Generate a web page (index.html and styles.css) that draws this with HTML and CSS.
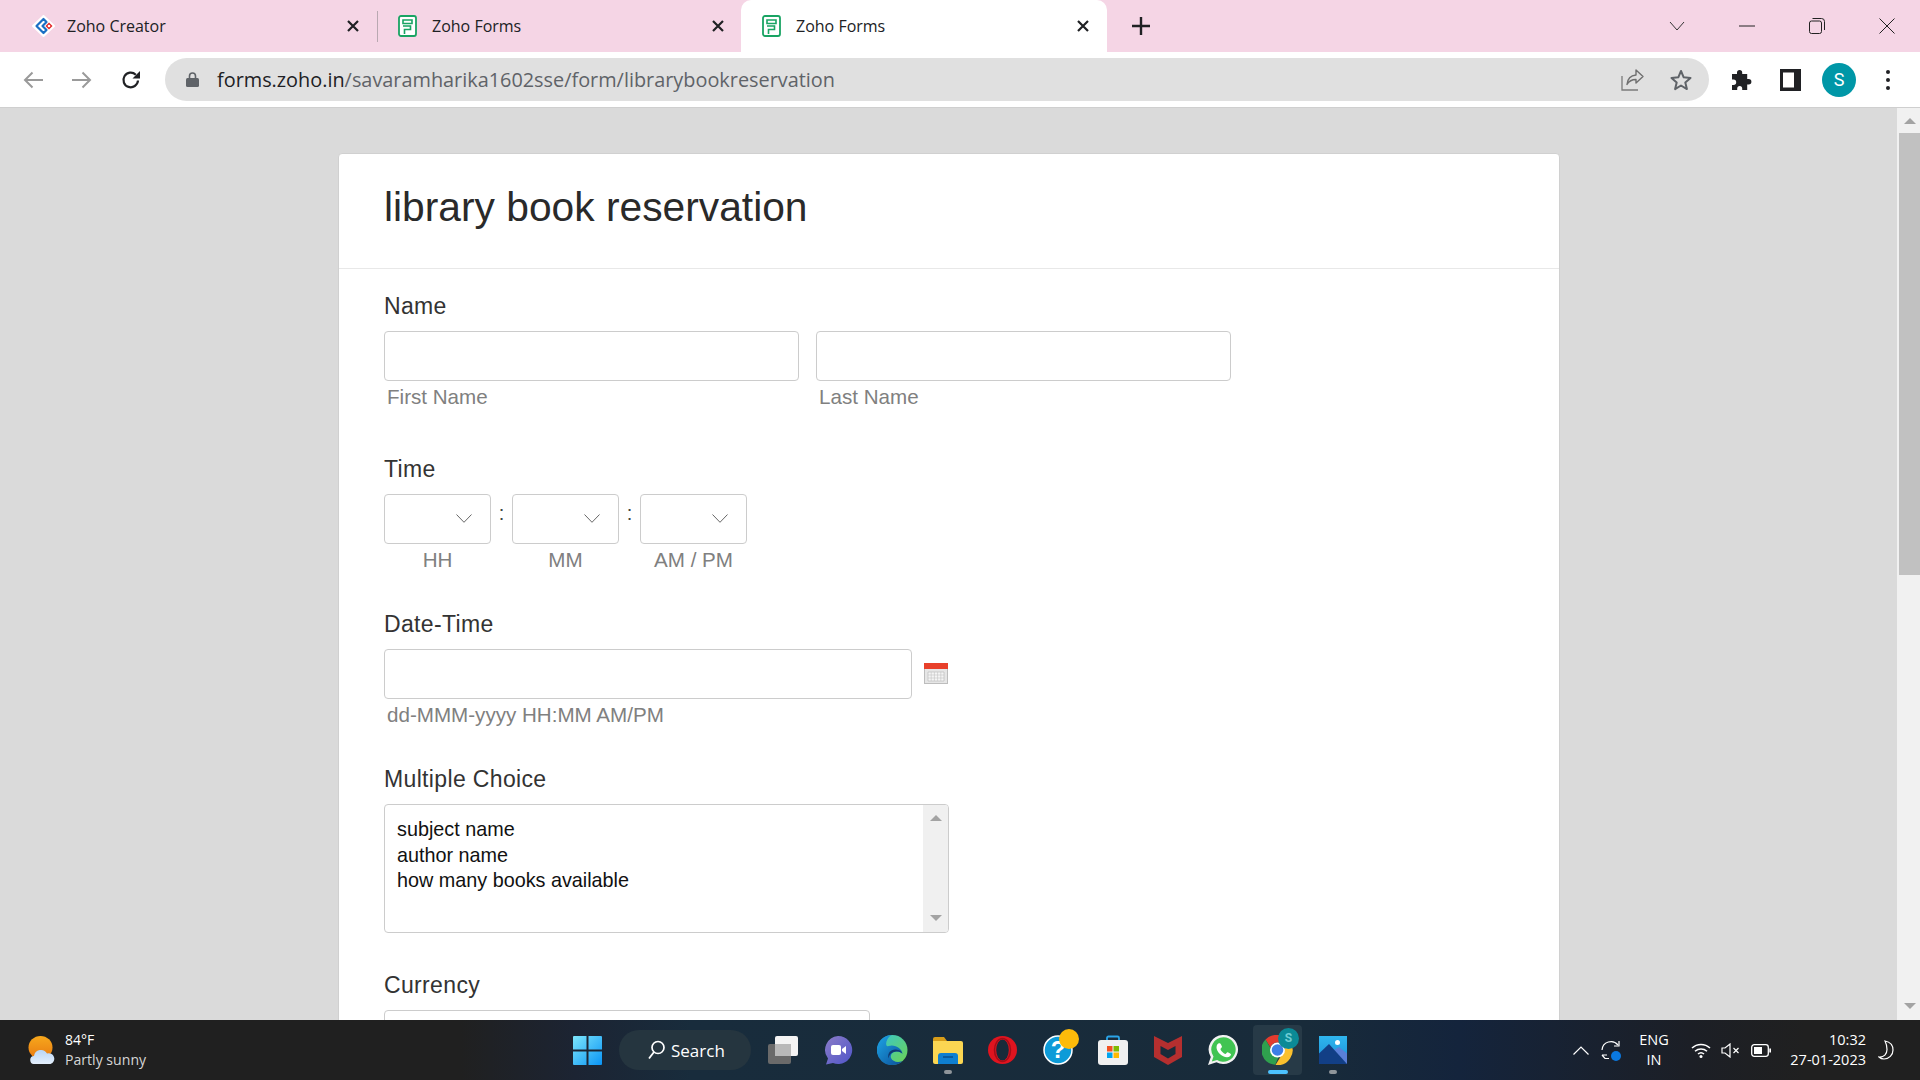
FILE: index.html
```html
<!DOCTYPE html>
<html lang="en">
<head>
    <meta charset="UTF-8">
    <meta name="viewport" content="width=device-width, initial-scale=1.0">
    <title>Zoho Forms</title>
    <link rel="stylesheet" href="styles.css">
</head>
<body>
    <!-- browser tabs -->
    <div class="tabstrip">
        <div class="tab tab-first">
            <svg class="fav-creator" viewBox="0 0 23 22"><path d="M11.500 1 22 11 11.500 21 1 11z" fill="#fff" stroke="#fff" stroke-width="2" stroke-linejoin="round"/><path d="M11.500 4 4.500 11l7 7 3-3-4-4 4-4z" fill="none" stroke="#1a6fc4" stroke-width="2.200" stroke-linejoin="round"/><path d="M17 7.500 20.500 11 17 14.500 13.500 11z" fill="#e42527"/><circle cx="17" cy="11" r="1.300" fill="#fff"/></svg>
            <span class="tab-title">Zoho Creator</span>
            <svg class="tab-close" viewBox="0 0 14 14"><path d="M2 2l10 10M12 2 2 12" stroke="#202124" stroke-width="2.200"/></svg>
        </div>
        <div class="tab-sep"></div>
        <div class="tab tab-second">
            <svg class="fav-forms" viewBox="0 0 19 22"><rect x="1" y="1" width="17" height="20" rx="2" fill="#fff" stroke="#19a463" stroke-width="1.800"/><path d="M5 5h9v3.500H5zM5 11h7.500v3.500H6.500V19" fill="none" stroke="#19a463" stroke-width="1.600"/></svg>
            <span class="tab-title">Zoho Forms</span>
            <svg class="tab-close" viewBox="0 0 14 14"><path d="M2 2l10 10M12 2 2 12" stroke="#202124" stroke-width="2.200"/></svg>
        </div>
        <div class="tab tab-active">
            <svg class="fav-forms" viewBox="0 0 19 22"><rect x="1" y="1" width="17" height="20" rx="2" fill="#fff" stroke="#19a463" stroke-width="1.800"/><path d="M5 5h9v3.500H5zM5 11h7.500v3.500H6.500V19" fill="none" stroke="#19a463" stroke-width="1.600"/></svg>
            <span class="tab-title">Zoho Forms</span>
            <svg class="tab-close" viewBox="0 0 14 14"><path d="M2 2l10 10M12 2 2 12" stroke="#202124" stroke-width="2.200"/></svg>
        </div>
        <svg class="new-tab" viewBox="0 0 18 18"><path d="M9 0v18M0 9h18" stroke="#202124" stroke-width="2.400"/></svg>
        <div class="win-controls">
            <div class="win-btn"><svg width="16" height="10" viewBox="0 0 16 10"><path d="M1 1l7 8 7-8" fill="none" stroke="#333" stroke-width="1"/></svg></div>
            <div class="win-btn"><svg width="16" height="2" viewBox="0 0 16 2"><path d="M0 1h16" stroke="#222" stroke-width="1"/></svg></div>
            <div class="win-btn"><svg width="16" height="16" viewBox="0 0 16 16"><rect x=".5" y="3" width="12" height="12.500" rx="2" fill="none" stroke="#222"/><path d="M3.500.5h9a3 3 0 0 1 3 3V12" fill="none" stroke="#222"/></svg></div>
            <div class="win-btn"><svg width="16" height="16" viewBox="0 0 16 16"><path d="M.5.5l15 15M15.500.5l-15 15" stroke="#222" stroke-width="1"/></svg></div>
        </div>
    </div>

    <!-- address bar -->
    <div class="toolbar">
        <svg class="nav-back" viewBox="0 0 20 18"><path d="M20 9H2M9.500 1.500 2 9l7.500 7.500" fill="none" stroke="#9a9a9a" stroke-width="2"/></svg>
        <svg class="nav-forward" viewBox="0 0 20 18"><path d="M0 9h18M10.500 1.500 18 9l-7.500 7.500" fill="none" stroke="#9a9a9a" stroke-width="2"/></svg>
        <svg class="nav-reload" viewBox="0 0 20 20"><path d="M17 10.500A7.300 7.300 0 1 1 14.800 4.700" fill="none" stroke="#202124" stroke-width="2.200"/><path d="M19 1v7.500h-7.500z" fill="#202124"/></svg>
        <div class="omnibox">
            <svg class="lock" viewBox="0 0 13 15"><path d="M3.500 6V4a3 3 0 0 1 6 0v2" fill="none" stroke="#5f6368" stroke-width="1.600"/><rect y="6" width="13" height="9" rx="1.500" fill="#5f6368"/></svg>
            <div class="url"><span class="url-host">forms.zoho.in</span>/savaramharika1602sse/form/librarybookreservation</div>
            <svg class="share" viewBox="0 0 23 22"><path d="M1 7v14h16" fill="none" stroke="#7b7b7b" stroke-width="1.300"/><path d="M15 1l7 6.500-7 6.500v-3.500c-4.500 0-7 1.500-9 5 .5-5.500 3.500-9 9-9.500z" fill="none" stroke="#6f6f6f" stroke-width="1.400" stroke-linejoin="round"/></svg>
            <svg class="star" viewBox="0 0 22 22"><path d="M11 2l2.700 6.300 6.800.6-5.200 4.500 1.600 6.700L11 16.500 5.100 20.100l1.600-6.700L1.500 8.900l6.800-.6z" fill="none" stroke="#5f6368" stroke-width="2" stroke-linejoin="round"/></svg>
        </div>
        <svg class="puzzle" viewBox="0 0 22 22"><path d="M1 5h5V3.500a2.600 2.600 0 0 1 5.200 0V5h5v5h1.500a2.700 2.700 0 0 1 0 5.400h-1.500V21h-5v-1.500a2.500 2.500 0 0 0-5 0V21H1v-5h1.500a2.700 2.700 0 0 0 0-5.400H1z" fill="#202124"/></svg>
        <svg class="side-panel" viewBox="0 0 21 22"><rect width="21" height="22" fill="#202124"/><rect x="3" y="3.500" width="11" height="15" fill="#fff"/></svg>
        <div class="avatar">S</div>
        <div class="kebab"><i></i><i></i><i></i></div>
    </div>

    <!-- page -->
    <div class="viewport">
        <div class="page">
            <div class="card">
                <div class="card-head">
                    <h1>library book reservation</h1>
                </div>
                <form class="card-body">
                    <div class="field field-name">
                        <label class="field-label">Name</label>
                        <div class="row">
                            <div class="col">
                                <input class="text-input input-name" type="text">
                                <div class="hint">First Name</div>
                            </div>
                            <div class="col">
                                <input class="text-input input-name" type="text">
                                <div class="hint">Last Name</div>
                            </div>
                        </div>
                    </div>

                    <div class="field">
                        <label class="field-label">Time</label>
                        <div class="row time-row">
                            <div class="col">
                                <div class="fake-select"><svg width="16" height="9" viewBox="0 0 16 9"><path d="M.5.5 8 8.300 15.500.5" fill="none" stroke="#666" stroke-width="1"/></svg></div>
                                <div class="hint hint-center">HH</div>
                            </div>
                            <span class="colon">:</span>
                            <div class="col">
                                <div class="fake-select"><svg width="16" height="9" viewBox="0 0 16 9"><path d="M.5.5 8 8.300 15.500.5" fill="none" stroke="#666" stroke-width="1"/></svg></div>
                                <div class="hint hint-center">MM</div>
                            </div>
                            <span class="colon">:</span>
                            <div class="col">
                                <div class="fake-select"><svg width="16" height="9" viewBox="0 0 16 9"><path d="M.5.5 8 8.300 15.500.5" fill="none" stroke="#666" stroke-width="1"/></svg></div>
                                <div class="hint hint-center">AM / PM</div>
                            </div>
                        </div>
                    </div>

                    <div class="field">
                        <label class="field-label">Date-Time</label>
                        <div class="row date-row">
                            <input class="text-input input-date" type="text">
                            <svg class="calendar" viewBox="0 0 24 21"><rect x=".5" y=".5" width="23" height="20" fill="#e6e6e6" stroke="#bdbdbd"/><rect width="24" height="6" fill="#e8402a"/><path d="M4 9h16v9H4z" fill="#f5f5f5" stroke="#b5b5b5" stroke-width=".6"/><path d="M4 12h16M4 15h16M7.200 9v9M10.400 9v9M13.600 9v9M16.800 9v9" stroke="#c2c2c2" stroke-width=".6"/></svg>
                        </div>
                        <div class="hint">dd-MMM-yyyy HH:MM AM/PM</div>
                    </div>

                    <div class="field">
                        <label class="field-label">Multiple Choice</label>
                        <div class="listbox">
                            <div class="list-items">
                                <div>subject name</div>
                                <div>author name</div>
                                <div>how many books available</div>
                            </div>
                            <div class="list-scroll">
                                <i class="arrow-up"></i>
                                <i class="arrow-down"></i>
                            </div>
                        </div>
                    </div>

                    <div class="field">
                        <label class="field-label">Currency</label>
                        <input class="text-input input-currency" type="text">
                    </div>
                </form>
            </div>
        </div>
        <div class="scrollbar">
            <div class="sb-top"><i class="arrow-up"></i></div>
            <div class="sb-thumb"></div>
            <div class="sb-bottom"><i class="arrow-down"></i></div>
        </div>
    </div>

    <!-- windows taskbar -->
    <div class="taskbar">
        <div class="weather">
            <svg width="28" height="28" viewBox="0 0 28 28"><defs><linearGradient id="sun" x1="0" y1="0" x2="0" y2="1"><stop offset="0" stop-color="#f7a81c"/><stop offset="1" stop-color="#e87a12"/></linearGradient><linearGradient id="cloud" x1="0" y1="0" x2="0" y2="1"><stop offset="0" stop-color="#b9d6f6"/><stop offset="1" stop-color="#e4effc"/></linearGradient></defs><ellipse cx="12.500" cy="11.500" rx="12" ry="11.500" fill="url(#sun)"/><path d="M6.500 28a4 4 0 0 1-.5-8 7 7 0 0 1 13-2.500 5.500 5.500 0 0 1 3.500 10.500z" fill="url(#cloud)"/></svg>
            <div class="weather-text">
                <div class="temp">84°F</div>
                <div class="sky">Partly sunny</div>
            </div>
        </div>

        <div class="slot">
            <svg width="29" height="29" viewBox="0 0 29 29"><defs><linearGradient id="win" x1="0" y1="0" x2="1" y2="1"><stop offset="0" stop-color="#7de6fb"/><stop offset="1" stop-color="#0a94f5"/></linearGradient></defs><path d="M1 0h12.500v13.500H0V1a1 1 0 0 1 1-1zM15.500 0H28a1 1 0 0 1 1 1v12.500H15.500zM0 15.500h13.500V29H1a1 1 0 0 1-1-1zM15.500 15.500H29V28a1 1 0 0 1-1 1H15.500z" fill="url(#win)"/></svg>
        </div>

        <div class="search-pill">
            <svg width="17" height="20" viewBox="0 0 17 20"><circle cx="10" cy="7.500" r="6" fill="none" stroke="#fff" stroke-width="1.700"/><path d="M6 12 1 18.500" stroke="#fff" stroke-width="1.800"/></svg>
            <span>Search</span>
        </div>

        <div class="slot">
            <svg width="30" height="28" viewBox="0 0 30 28"><rect y="8" width="23" height="20" rx="2" fill="#6a6a6a"/><rect x="7" width="23" height="20" rx="2" fill="#f4f4f4"/><rect x="7" y="8" width="16" height="12" fill="#b9b9b9"/></svg>
        </div>
        <div class="slot">
            <svg width="30" height="30" viewBox="0 0 30 30"><defs><linearGradient id="teams" x1="0" y1="0" x2="1" y2="1"><stop offset="0" stop-color="#8b7cc8"/><stop offset="1" stop-color="#4f55c9"/></linearGradient></defs><path d="M15 1a14 14 0 1 1-5 27l-7 1.500 2-6A14 14 0 0 1 15 1z" fill="url(#teams)"/><rect x="8" y="10" width="10" height="10" rx="2" fill="#fff"/><path d="M19 14l4-3v8l-4-3z" fill="#fff"/></svg>
        </div>
        <div class="slot">
            <svg width="31" height="30" viewBox="0 0 31 30"><defs><linearGradient id="edge-a" x1="0" y1="0" x2="1" y2="1"><stop offset="0" stop-color="#37c6d0"/><stop offset="1" stop-color="#6fd34f"/></linearGradient><linearGradient id="edge-b" x1="0" y1="0" x2="1" y2="1"><stop offset="0" stop-color="#1ea6e6"/><stop offset="1" stop-color="#0b4f9a"/></linearGradient></defs><circle cx="15.500" cy="15" r="15" fill="url(#edge-a)"/><path d="M14 0A15 15 0 0 0 15.500 30c4 0 8-1.500 10-4-5 2-10 .5-11.500-3-1-3 1-6 5-6.500 3-.3 5 1 6.500 2.500-.5-6-8-10-14-8C8 12.500 8 5 14 0z" fill="url(#edge-b)"/><path d="M19 16.500a8.500 8.500 0 0 0-7.500 7C10 18 14 14 19 14.500c3 .3 5.500 1.500 6 3.500-1.500-1-3.500-1.800-6-1.500z" fill="#113a72"/></svg>
        </div>
        <div class="slot slot-open">
            <svg width="30" height="27" viewBox="0 0 30 27"><path d="M0 2a2 2 0 0 1 2-2h9l3 4H0z" fill="#d79d19"/><path d="M0 4h28a2 2 0 0 1 2 2v19a2 2 0 0 1-2 2H2a2 2 0 0 1-2-2z" fill="#fbd652"/><path d="M5 27v-8a3 3 0 0 1 3-3h14a3 3 0 0 1 3 3v8z" fill="#0f7fd0"/><path d="M10 20h10" stroke="#0a4f8c" stroke-width="1.500"/></svg>
        </div>
        <div class="slot">
            <svg width="29" height="28" viewBox="0 0 29 28"><ellipse cx="14.500" cy="14" rx="14.500" ry="14" fill="#e0141f"/><ellipse cx="14.500" cy="14" rx="6.300" ry="10.500" fill="#172b3a"/><ellipse cx="14.500" cy="14" rx="8" ry="11.500" fill="none" stroke="#a40d18" stroke-width="1.500"/></svg>
        </div>
        <div class="slot">
            <svg width="30" height="30" viewBox="0 0 30 30"><circle cx="15" cy="15" r="14" fill="#0d9bd8" stroke="#fff" stroke-width="1.500"/><text class="help-mark" x="15" y="23" text-anchor="middle">?</text></svg>
            <span class="help-badge"></span>
        </div>
        <div class="slot">
            <svg width="30" height="30" viewBox="0 0 30 30"><path d="M9 7V3a1.500 1.500 0 0 1 1.500-1.500h9A1.500 1.500 0 0 1 21 3v4" fill="none" stroke="#2aa4e8" stroke-width="1.800"/><rect y="5" width="30" height="25" rx="3" fill="#f0f0f0"/><rect x="9" y="11" width="5.500" height="5.500" fill="#f25022"/><rect x="15.500" y="11" width="5.500" height="5.500" fill="#7fba00"/><rect x="9" y="17.500" width="5.500" height="5.500" fill="#00a4ef"/><rect x="15.500" y="17.500" width="5.500" height="5.500" fill="#ffb900"/></svg>
        </div>
        <div class="slot">
            <svg width="28" height="30" viewBox="0 0 28 30"><path d="M0 1l14 7 14-7v21l-14 8-14-8z" fill="#b52f2f"/><path d="M6.500 11l7.500 4 7.500-4v8L14 23.500 6.500 19z" fill="#172b3a"/></svg>
        </div>
        <div class="slot">
            <svg width="30" height="30" viewBox="0 0 30 30"><path d="M15.500 0a14.500 14.500 0 1 1-7 27.200L0 30l2.800-8A14.500 14.500 0 0 1 15.500 0z" fill="#f2f2f2"/><path d="M15.500 2.300a12.200 12.200 0 1 1-6.400 22.600l-5.300 1.700 1.700-5.200A12.200 12.200 0 0 1 15.500 2.300z" fill="#41c452"/><path d="M11 8.300c-.8 0-2.500 1.500-2.500 4 0 4.500 5.500 10 10.500 10 2.500 0 4-1.700 4-3 0-.5-3-2-3.500-2s-1.500 1.700-2 1.700c-1.500 0-5-3.500-5-5 0-.6 1.500-1.500 1.500-2.200 0-.5-1.500-3.500-2-3.500z" fill="#fff"/></svg>
        </div>
        <div class="slot slot-active">
            <div class="active-box">
                <svg width="31" height="30" viewBox="0 0 30 30"><path d="M15 0a15 15 0 0 1 13 7.500H15a7.500 7.500 0 0 0-7 5L3 4.500A15 15 0 0 1 15 0z" fill="#e33b2e"/><path d="M3 4.500 9.500 15.500A6.500 6.500 0 0 0 16 22.300L12.700 29.800A15 15 0 0 1 3 4.500z" fill="#2fa04e"/><path d="M28 7.500A15 15 0 0 1 13 30l7-11.500a7 7 0 0 0 0-11z" fill="#fbc02d"/><circle cx="15" cy="15" r="7.500" fill="#fff"/><circle cx="15" cy="15" r="5.800" fill="#3d7fe6"/></svg>
                <span class="chrome-badge">S</span>
            </div>
        </div>
        <div class="slot slot-open">
            <svg width="28" height="28" viewBox="0 0 28 28"><defs><linearGradient id="sky" x1="0" y1="0" x2="0" y2="1"><stop offset="0" stop-color="#2fb5ee"/><stop offset="1" stop-color="#1b8fd8"/></linearGradient></defs><rect width="28" height="28" fill="url(#sky)"/><circle cx="18.500" cy="6.500" r="2.500" fill="#fff"/><path d="M15 14l5-3 8 6.500V28H18z" fill="#5a7fd8"/><path d="M0 17.500 10 8l18 20H0z" fill="#123f86"/></svg>
        </div>

        <div class="tray">
            <svg width="16" height="9" viewBox="0 0 16 9"><path d="M.5 8.500 8 1l7.500 7.500" fill="none" stroke="#fff" stroke-width="1.200"/></svg>
            <svg class="tray-sync" width="20" height="21" viewBox="0 0 20 21"><path d="M1 10A9 9 0 0 1 17 5" fill="none" stroke="#fff" stroke-width="1.200"/><path d="M18 1v5h-5" fill="none" stroke="#fff" stroke-width="1.200"/><path d="M1 15h5M1 15l3 3.500h4" fill="none" stroke="#fff" stroke-width="1.200"/><circle cx="15" cy="16" r="5" fill="#0a78e0"/></svg>
            <div class="lang"><div>ENG</div><div>IN</div></div>
            <svg class="tray-wifi" width="20" height="15" viewBox="0 0 20 15"><path d="M1 5a13 13 0 0 1 18 0M4 8.200a9 9 0 0 1 12 0M7 11a4.500 4.500 0 0 1 6 0" fill="none" stroke="#fff" stroke-width="1.500"/><circle cx="10" cy="13.500" r="1.500" fill="#fff"/></svg>
            <svg class="tray-vol" width="19" height="15" viewBox="0 0 19 15"><path d="M1 5h3l5-4v13l-5-4H1z" fill="none" stroke="#fff" stroke-width="1.200"/><path d="M12.500 5l5 5M17.500 5l-5 5" stroke="#fff" stroke-width="1.200"/></svg>
            <svg class="tray-batt" width="20" height="13" viewBox="0 0 20 13"><rect x=".7" y=".7" width="16.600" height="11.600" rx="2.500" fill="none" stroke="#fff" stroke-width="1.300"/><rect x="3" y="3" width="8" height="7" fill="#fff"/><rect x="18.300" y="4.500" width="1.700" height="4" fill="#fff"/></svg>
            <div class="clock"><div>10:32</div><div>27-01-2023</div></div>
            <svg class="tray-moon" width="16" height="20" viewBox="0 0 16 20"><path d="M7 1c5 1 8 4.500 8 9a9 9 0 0 1-9 9c-2.500 0-4-1-5-2 5 .5 8-3 8-7.500C9 6 8 3 7 1z" fill="none" stroke="#fff" stroke-width="1.200"/></svg>
        </div>
    </div>
</body>
</html>
```

FILE: styles.css
```css
html, body {
    height: 100%;
}
body {
    margin: 0;
    height: 1080px;
    overflow: hidden;
    display: flex;
    flex-direction: column;
    font-family: "Liberation Sans", Arial, sans-serif;
    background-color: #dadada;
}

/* tab strip */
.tabstrip {
    height: 52px;
    flex: none;
    display: flex;
    align-items: center;
    padding-left: 32px;
    background-color: #f5d5e5;
}
.tab {
    height: 52px;
    display: flex;
    align-items: center;
    box-sizing: border-box;
    font-family: "Open Sans", sans-serif;
    font-size: 16px;
    color: #202124;
}
.tab-first {
    width: 345px;
    padding-right: 17px;
}
.tab-second {
    width: 363px;
    padding-left: 20px;
    padding-right: 16px;
}
.tab-active {
    width: 366px;
    padding-left: 21px;
    padding-right: 17px;
    background-color: #fff;
    border-radius: 10px 10px 0 0;
}
.tab-title {
    flex: 1;
}
.tab-sep {
    width: 1px;
    height: 31px;
    background-color: #b9a8b1;
}
.fav-creator {
    width: 23px;
    height: 22px;
    margin-right: 12px;
}
.fav-forms {
    width: 19px;
    height: 22px;
    margin-right: 15px;
}
.tab-close {
    width: 14px;
    height: 14px;
}
.new-tab {
    width: 18px;
    height: 18px;
    margin-left: 25px;
}
.win-controls {
    margin-left: auto;
    margin-right: -2px;
    display: flex;
}
.win-btn {
    width: 70px;
    height: 44px;
    display: flex;
    align-items: center;
    justify-content: center;
}

/* toolbar */
.toolbar {
    height: 55px;
    flex: none;
    display: flex;
    align-items: center;
    padding-left: 23px;
    background-color: #fff;
    border-bottom: 1px solid #cfcfcf;
}
.nav-back, .nav-forward {
    width: 20px;
    height: 18px;
}
.nav-forward {
    margin-left: 29px;
}
.nav-reload {
    width: 20px;
    height: 20px;
    margin-left: 29px;
}
.omnibox {
    width: 1544px;
    height: 43px;
    margin-left: 24px;
    display: flex;
    align-items: center;
    box-sizing: border-box;
    padding: 0 17px 0 21px;
    border-radius: 22px;
    background-color: #e0e0e0;
}
.lock {
    width: 13px;
    height: 15px;
    margin-right: 18px;
}
.url {
    flex: 1;
    font-family: "Open Sans", sans-serif;
    font-size: 19.880px;
    color: #5f6368;
}
.url-host {
    color: #202124;
}
.share {
    width: 23px;
    height: 22px;
    margin-right: 26px;
}
.star {
    width: 22px;
    height: 22px;
}
.puzzle {
    width: 22px;
    height: 22px;
    margin-left: 22px;
}
.side-panel {
    width: 21px;
    height: 22px;
    margin-left: 27px;
}
.avatar {
    width: 34px;
    height: 34px;
    margin-left: 21px;
    border-radius: 50%;
    background-color: #0097a7;
    color: #fff;
    font-family: Roboto, sans-serif;
    font-size: 18px;
    line-height: 34px;
    text-align: center;
}
.kebab {
    margin-left: 30px;
    display: flex;
    flex-direction: column;
    gap: 4px;
}
.kebab i {
    width: 4px;
    height: 4px;
    border-radius: 50%;
    background-color: #202124;
}

/* page area */
.viewport {
    height: 912px;
    flex: none;
    display: flex;
    overflow: hidden;
}
.page {
    flex: 1;
    overflow: hidden;
    background-color: #dadada;
}
.card {
    width: 1222px;
    margin: 45px 0 0 338px;
    box-sizing: border-box;
    height: 1200px;
    background-color: #fff;
    border: 1px solid #d0d0d0;
    border-radius: 4px;
}
.card-head {
    height: 115px;
    padding: 0 0 8px 45px;
    box-sizing: border-box;
    display: flex;
    align-items: center;
    border-bottom: 1px solid #e8e8e8;
}
h1 {
    margin: 0;
    font-size: 40.750px;
    font-weight: 400;
    color: #2a2a2a;
}
.card-body {
    padding: 23px 0 0 45px;
}
.field {
    margin-bottom: 38px;
}
.field-name {
    margin-bottom: 46px;
}
.field-label {
    display: block;
    height: 26px;
    line-height: 28px;
    margin-bottom: 13px;
    font-size: 23px;
    letter-spacing: .35px;
    color: #333;
}
.row {
    display: flex;
}
.col {
    display: flex;
    flex-direction: column;
}
.row > .col + .col {
    margin-left: 17px;
}
.text-input, .fake-select {
    display: block;
    box-sizing: border-box;
    height: 50px;
    border: 1px solid #ccc;
    border-radius: 4px;
    background-color: #fff;
}
.input-name {
    width: 415px;
}
.input-date {
    width: 528px;
}
.input-currency {
    width: 486px;
}
.hint {
    height: 24px;
    line-height: 24px;
    margin-top: 4px;
    padding-left: 3px;
    font-size: 20.600px;
    color: #808080;
}
.hint-center {
    padding-left: 0;
    text-align: center;
}
.fake-select {
    width: 107px;
    display: flex;
    align-items: center;
    justify-content: flex-end;
    padding-right: 18px;
}
.fake-select svg {
    margin-bottom: 2px;
}
.time-row .colon {
    width: 21px;
    margin-top: 8px;
    text-align: center;
    font-size: 20px;
    color: #444;
}
.date-row {
    align-items: center;
}
.calendar {
    width: 24px;
    height: 21px;
    margin-left: 12px;
    margin-bottom: 2px;
}
.listbox {
    width: 565px;
    height: 129px;
    display: flex;
    box-sizing: border-box;
    border: 1px solid #ccc;
    border-radius: 4px;
    overflow: hidden;
}
.list-items {
    flex: 1;
    padding: 12px 0 0 12px;
    font-size: 19.800px;
    line-height: 25.500px;
    color: #111;
}
.list-scroll {
    width: 25px;
    display: flex;
    flex-direction: column;
    justify-content: space-between;
    align-items: center;
    padding: 10px 0 11px;
    box-sizing: border-box;
    background-color: #f0f0f0;
}
.arrow-up, .arrow-down {
    width: 0;
    height: 0;
    border-left: 6px solid transparent;
    border-right: 6px solid transparent;
}
.arrow-up {
    border-bottom: 6px solid #a3a3a3;
}
.arrow-down {
    border-top: 6px solid #a3a3a3;
}

/* page scrollbar */
.scrollbar {
    width: 23px;
    flex: none;
    display: flex;
    flex-direction: column;
    background-color: #f1f1f1;
}
.sb-top {
    height: 25px;
    display: flex;
    align-items: center;
    justify-content: center;
    margin-left: 2px;
}
.sb-thumb {
    height: 442px;
    margin-left: 2px;
    background-color: #c1c1c1;
}
.sb-bottom {
    flex: 1;
    display: flex;
    align-items: flex-end;
    justify-content: center;
    margin-left: 2px;
    padding-bottom: 11px;
}

/* taskbar */
.taskbar {
    height: 60px;
    flex: none;
    display: flex;
    align-items: center;
    color: #fff;
    font-family: "Open Sans", sans-serif;
    background: linear-gradient(90deg, #202020 0, #202020 24%, #1c2433 30%, #182c3c 36%, #182b3a 68%, #14243c 76%, #1c1f26 88%, #202020 94%);
}
.weather {
    width: 560px;
    flex: none;
    box-sizing: border-box;
    padding-left: 28px;
    display: flex;
    align-items: center;
    gap: 9px;
}
.temp {
    font-size: 14px;
    line-height: 20px;
}
.sky {
    font-size: 14.100px;
    line-height: 20px;
    color: #d6d6d6;
}
.slot {
    position: relative;
    width: 55px;
    height: 60px;
    flex: none;
    display: flex;
    align-items: center;
    justify-content: center;
}
.slot-open::after {
    content: "";
    position: absolute;
    left: 24px;
    top: 50px;
    width: 8px;
    height: 4px;
    border-radius: 2px;
    background-color: #8f959a;
}
.search-pill {
    width: 132px;
    height: 40px;
    margin: 0 4px;
    flex: none;
    display: flex;
    align-items: center;
    gap: 6px;
    padding-left: 29px;
    box-sizing: border-box;
    border-radius: 20px;
    background-color: #25353f;
    font-size: 17px;
}
.help-mark {
    font-family: "Liberation Sans", sans-serif;
    font-size: 24px;
    font-weight: 700;
    fill: #fff;
}
.help-badge {
    position: absolute;
    left: 29px;
    top: 9px;
    width: 20px;
    height: 20px;
    border-radius: 50%;
    background-color: #fdbb0a;
}
.active-box {
    position: relative;
    width: 49px;
    height: 50px;
    display: flex;
    align-items: center;
    justify-content: center;
    box-sizing: border-box;
    border-radius: 4px;
    background-color: #273a47;
}
.slot-active::after {
    content: "";
    position: absolute;
    left: 18px;
    top: 50px;
    width: 20px;
    height: 4px;
    border-radius: 2px;
    background-color: #4cc2ff;
}
.chrome-badge {
    position: absolute;
    left: 25px;
    top: 3px;
    width: 21px;
    height: 21px;
    border-radius: 50%;
    background-color: #0b8a96;
    color: #6fcdd4;
    font-family: Roboto, sans-serif;
    font-size: 12px;
    font-weight: 700;
    line-height: 21px;
    text-align: center;
}
.tray {
    display: flex;
    align-items: center;
    margin-left: 213px;
    font-size: 14.500px;
}
.tray-sync {
    margin-left: 12px;
}
.lang {
    width: 40px;
    margin-left: 13px;
    text-align: center;
    line-height: 20px;
}
.tray-wifi {
    margin-left: 17px;
}
.tray-vol {
    margin-left: 10px;
}
.tray-batt {
    margin-left: 11px;
}
.clock {
    width: 95px;
    text-align: right;
    line-height: 20px;
}
.tray-moon {
    margin-left: 12px;
}
```
